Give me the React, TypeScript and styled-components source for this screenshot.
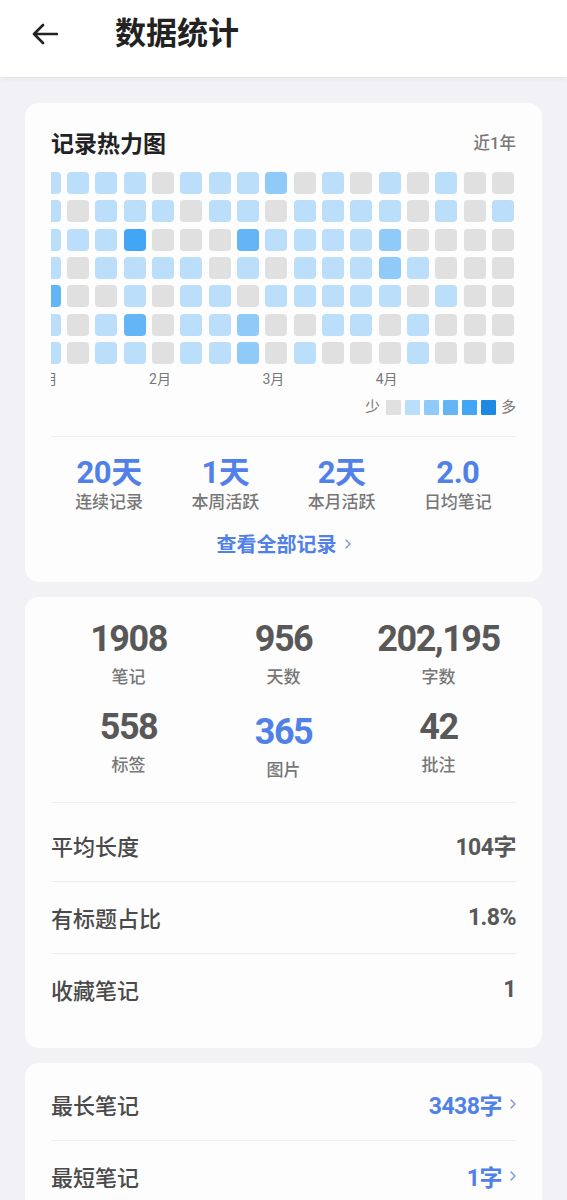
import React from "react";
import styled, { createGlobalStyle } from "styled-components";

const GlobalStyle = createGlobalStyle`
  html, body { margin: 0; padding: 0; background: #f2f2f6; }
  body {
    font-family: Roboto, "Noto Sans CJK SC", sans-serif;
    -webkit-font-smoothing: antialiased;
  }
  * { box-sizing: border-box; }
`;

const BLUE = "#5080e8";
const LEVELS = ["#e0e0e0", "#bbdefb", "#90caf9", "#64b5f6", "#42a5f5", "#1e88e5"];

const ROWS = [
  "11110111201010100",
  "10111011011110101",
  "11140003111120000",
  "10111101011121000",
  "30010110111110100",
  "10130112001101000",
  "10110112010001000",
];

const Page = styled.div`
  min-height: 1200px;
  background: #f2f2f6;
`;

const Header = styled.header`
  height: 77px;
  background: #ffffff;
  box-shadow: 0 1px 5px rgba(0, 0, 0, 0.07);
  display: flex;
  align-items: center;
  padding: 0 0 9px 32px;
`;

const BackButton = styled.button`
  border: 0;
  background: transparent;
  padding: 0;
  width: 26px;
  height: 22px;
  display: flex;
  align-items: center;
  justify-content: center;
`;

const HeaderTitle = styled.h1`
  margin: 0 0 0 57px;
  font-size: 31px;
  font-weight: 700;
  color: #222;
  line-height: 40px;
`;

const Main = styled.main`
  padding: 26px 25px 0;
  display: flex;
  flex-direction: column;
  gap: 15px;
`;

const Card = styled.section<{ $pad: string }>`
  background: #fdfdfd;
  border-radius: 14px;
  padding: ${(p) => p.$pad};
`;

const TitleRow = styled.div`
  display: flex;
  justify-content: space-between;
  align-items: center;
  height: 28px;
`;

const CardTitle = styled.h2`
  margin: 0;
  font-size: 23px;
  font-weight: 700;
  color: #222;
`;

const RangeText = styled.span`
  font-size: 16.5px;
  font-weight: 500;
  color: #777;
`;

const HeatScroll = styled.div`
  margin-top: 16px;
  overflow: hidden;
  display: flex;
  justify-content: flex-end;
  padding-right: 2px;
`;

const HeatContent = styled.div`
  flex-shrink: 0;
  display: flex;
  flex-direction: column;
`;

const HeatGrid = styled.div`
  display: grid;
  grid-template-rows: repeat(7, 22px);
  grid-auto-columns: 22px;
  grid-auto-flow: column;
  gap: 6.33px;
`;

const Cell = styled.div<{ $level: number }>`
  width: 22px;
  height: 22px;
  border-radius: 4px;
  background: ${(p) => LEVELS[p.$level]};
`;

const MonthRow = styled.div`
  margin-top: 7px;
  display: grid;
  grid-template-columns: repeat(17, 22px);
  column-gap: 6.33px;
  height: 16px;
`;

const MonthLabel = styled.span<{ $col: number }>`
  grid-column: ${(p) => p.$col} / span 3;
  margin-left: -3px;
  font-size: 14px;
  line-height: 16px;
  color: #777;
  white-space: nowrap;
`;

const Legend = styled.div`
  margin-top: 13px;
  display: flex;
  justify-content: flex-end;
  align-items: center;
  height: 15px;
`;

const LegendText = styled.span<{ $gap: string }>`
  font-size: 15px;
  line-height: 15px;
  color: #777;
  margin: ${(p) => p.$gap};
`;

const LegendSwatches = styled.div`
  display: flex;
  gap: 4px;
`;

const Swatch = styled.div<{ $level: number }>`
  width: 15px;
  height: 15px;
  border-radius: 1px;
  background: ${(p) => LEVELS[p.$level]};
`;

const Divider = styled.div<{ $mt?: number }>`
  height: 1px;
  background: #eeeeee;
  margin-top: ${(p) => p.$mt ?? 0}px;
`;

const SummaryGrid = styled.div`
  margin-top: 19px;
  display: grid;
  grid-template-columns: repeat(4, 1fr);
`;

const SummaryItem = styled.div`
  display: flex;
  flex-direction: column;
  align-items: center;
`;

const SummaryValue = styled.span`
  font-size: 31px;
  font-weight: 700;
  line-height: 34px;
  color: ${BLUE};
  letter-spacing: -0.5px;
`;

const SummaryLabel = styled.span`
  margin-top: 1px;
  font-size: 17px;
  font-weight: 500;
  line-height: 22px;
  color: #777;
`;

const LinkRow = styled.a`
  margin-top: 17px;
  display: flex;
  justify-content: center;
  align-items: center;
  gap: 8px;
  height: 28px;
  font-size: 20px;
  font-weight: 600;
  color: ${BLUE};
  text-decoration: none;
`;

const StatsGrid = styled.div`
  display: grid;
  grid-template-columns: repeat(3, 1fr);
  row-gap: 16px;
  align-items: start;
`;

const StatCell = styled.div<{ $shift?: number }>`
  display: flex;
  flex-direction: column;
  align-items: center;
  padding-top: ${(p) => p.$shift ?? 0}px;
`;

const StatValue = styled.span<{ $blue?: boolean }>`
  font-size: 36px;
  font-weight: 700;
  line-height: 44px;
  letter-spacing: -1.5px;
  color: ${(p) => (p.$blue ? BLUE : "#585858")};
`;

const StatLabel = styled.span`
  margin-top: 4px;
  font-size: 17px;
  font-weight: 500;
  line-height: 24px;
  color: #777;
`;

const ListRow = styled.div<{ $mt?: number }>`
  height: 71px;
  margin-top: ${(p) => p.$mt ?? 0}px;
  display: flex;
  justify-content: space-between;
  align-items: center;
`;

const RowLabel = styled.span`
  font-size: 22px;
  font-weight: 500;
  color: #4a4a4a;
`;

const RowValue = styled.span<{ $blue?: boolean }>`
  display: flex;
  align-items: center;
  gap: 8px;
  font-size: 23px;
  font-weight: 700;
  letter-spacing: -0.5px;
  color: ${(p) => (p.$blue ? BLUE : "#585858")};
`;

const Chevron = ({ color = "#7b95cc" }: { color?: string }) => (
  <svg width="6" height="10" viewBox="0 0 6 10" fill="none">
    <path d="M1 1 L5 5 L1 9" stroke={color} strokeWidth="1.4" strokeLinecap="round" strokeLinejoin="round" />
  </svg>
);

const columns = Array.from({ length: 17 }, (_, c) => ROWS.map((r) => Number(r[c])));

const months = [
  { col: 1, text: "1月" },
  { col: 5, text: "2月" },
  { col: 9, text: "3月" },
  { col: 13, text: "4月" },
];

const summary = [
  { v: "20天", l: "连续记录" },
  { v: "1天", l: "本周活跃" },
  { v: "2天", l: "本月活跃" },
  { v: "2.0", l: "日均笔记" },
];

const stats = [
  { v: "1908", l: "笔记" },
  { v: "956", l: "天数" },
  { v: "202,195", l: "字数" },
  { v: "558", l: "标签" },
  { v: "365", l: "图片", blue: true, shift: 5 },
  { v: "42", l: "批注" },
];

const details = [
  { l: "平均长度", v: "104字" },
  { l: "有标题占比", v: "1.8%" },
  { l: "收藏笔记", v: "1" },
];

const extremes = [
  { l: "最长笔记", v: "3438字" },
  { l: "最短笔记", v: "1字" },
];

export default function App() {
  return (
    <Page>
      <GlobalStyle />
      <Header>
        <BackButton aria-label="返回">
          <svg width="26" height="22" viewBox="0 0 26 22" fill="none">
            <path d="M25 11 H2 M11 2 L2 11 L11 20" stroke="#222" strokeWidth="2.6" strokeLinecap="round" strokeLinejoin="round" />
          </svg>
        </BackButton>
        <HeaderTitle>数据统计</HeaderTitle>
      </Header>
      <Main>
        <Card $pad="25px 26px 24px">
          <TitleRow>
            <CardTitle>记录热力图</CardTitle>
            <RangeText>近1年</RangeText>
          </TitleRow>
          <HeatScroll>
            <HeatContent>
              <HeatGrid>
                {columns.map((col, ci) =>
                  col.map((lv, ri) => <Cell key={`${ci}-${ri}`} $level={lv} />)
                )}
              </HeatGrid>
              <MonthRow>
                {months.map((m) => (
                  <MonthLabel key={m.text} $col={m.col}>
                    {m.text}
                  </MonthLabel>
                ))}
              </MonthRow>
            </HeatContent>
          </HeatScroll>
          <Legend>
            <LegendText $gap="0 6px 0 0">少</LegendText>
            <LegendSwatches>
              {LEVELS.map((_, i) => (
                <Swatch key={i} $level={i} />
              ))}
            </LegendSwatches>
            <LegendText $gap="0 0 0 5px">多</LegendText>
          </Legend>
          <Divider $mt={21} />
          <SummaryGrid>
            {summary.map((s) => (
              <SummaryItem key={s.l}>
                <SummaryValue>{s.v}</SummaryValue>
                <SummaryLabel>{s.l}</SummaryLabel>
              </SummaryItem>
            ))}
          </SummaryGrid>
          <LinkRow href="#">
            查看全部记录
            <Chevron />
          </LinkRow>
        </Card>

        <Card $pad="20px 26px 23px">
          <StatsGrid>
            {stats.map((s) => (
              <StatCell key={s.l} $shift={s.shift}>
                <StatValue $blue={s.blue}>{s.v}</StatValue>
                <StatLabel>{s.l}</StatLabel>
              </StatCell>
            ))}
          </StatsGrid>
          <Divider $mt={20} />
          {details.map((d, i) => (
            <React.Fragment key={d.l}>
              {i > 0 && <Divider />}
              <ListRow $mt={i === 0 ? 7 : 0}>
                <RowLabel>{d.l}</RowLabel>
                <RowValue>{d.v}</RowValue>
              </ListRow>
            </React.Fragment>
          ))}
        </Card>

        <Card $pad="6px 26px 6px">
          {extremes.map((d, i) => (
            <React.Fragment key={d.l}>
              {i > 0 && <Divider />}
              <ListRow>
                <RowLabel>{d.l}</RowLabel>
                <RowValue $blue>
                  {d.v}
                  <Chevron />
                </RowValue>
              </ListRow>
            </React.Fragment>
          ))}
        </Card>
      </Main>
    </Page>
  );
}
